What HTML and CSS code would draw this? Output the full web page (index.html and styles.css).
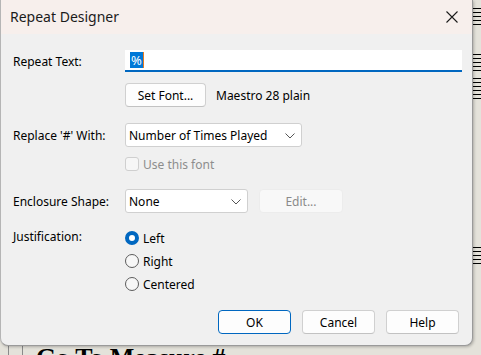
FILE: index.html
```html
<!DOCTYPE html>
<html>
<head>
<meta charset="utf-8">
<link rel="stylesheet" href="styles.css">
</head>
<body>
<div class="desk">
  <div class="staff s1"></div>
  <div class="staff s2"></div>
  <div class="staff s3"></div>
  <div class="staff s4"></div>
  <div class="vline v1"></div>
  <div class="vline v2"></div>
  <div class="goto">Go To Measure #</div>
  <div class="dialog">
    <div class="titlebar">
      <span class="title">Repeat Designer</span>
      <svg class="close" width="12" height="12" viewBox="0 0 12 12"><path d="M0.5 0.5 L11.5 11.5 M11.5 0.5 L0.5 11.5" stroke="#1b1b1b" stroke-width="1.1" fill="none"/></svg>
    </div>
    <div class="content">
      <div class="row r1">
        <label class="lbl">Repeat Text:</label>
        <div class="textbox"><span class="sel">%</span><span class="caret"></span></div>
      </div>
      <div class="row r2">
        <span class="lbl"></span>
        <button class="btn setfont">Set Font...</button>
        <span class="info">Maestro 28 plain</span>
      </div>
      <div class="row r3">
        <label class="lbl">Replace '#' With:</label>
        <div class="select sel-wide"><span>Number of Times Played</span><svg width="10" height="6" viewBox="0 0 10 6"><path d="M0.5 0.5 L5 5 L9.5 0.5" stroke="#555" fill="none" stroke-width="1"/></svg></div>
      </div>
      <div class="row r4">
        <span class="lbl"></span>
        <span class="check"></span>
        <span class="disabled-text">Use this font</span>
      </div>
      <div class="row r5">
        <label class="lbl">Enclosure Shape:</label>
        <div class="select sel-narrow"><span>None</span><svg width="10" height="6" viewBox="0 0 10 6"><path d="M0.5 0.5 L5 5 L9.5 0.5" stroke="#555" fill="none" stroke-width="1"/></svg></div>
        <button class="btn edit" disabled>Edit...</button>
      </div>
      <div class="row r6">
        <label class="lbl just">Justification:</label>
        <div class="radios">
          <div class="radio-row"><span class="radio on"></span><span>Left</span></div>
          <div class="radio-row"><span class="radio"></span><span>Right</span></div>
          <div class="radio-row"><span class="radio"></span><span>Centered</span></div>
        </div>
      </div>
      <div class="buttons">
        <button class="btn dlg default">OK</button>
        <button class="btn dlg">Cancel</button>
        <button class="btn dlg">Help</button>
      </div>
    </div>
  </div>
</div>
</body>
</html>
```

FILE: styles.css
```css
html, body {
  margin: 0;
  padding: 0;
}
body {
  width: 481px;
  height: 355px;
  overflow: hidden;
  background: #dcdad2;
  font-family: "Noto Sans", sans-serif;
  font-size: 12px;
  color: #000;
}
.desk {
  position: relative;
  width: 481px;
  height: 355px;
  overflow: hidden;
  background: #e4e2da;
}
.staff {
  position: absolute;
  left: 470px;
  width: 20px;
  height: 17px;
  background: repeating-linear-gradient(to bottom, #000 0, #000 1px, transparent 1px, transparent 4px);
}
.s1 { top: 8px; }
.s2 { top: 54px; }
.s3 { top: 78px; height: 22px; }
.s4 { top: 247px; }
.vline {
  position: absolute;
  top: 340px;
  width: 1px;
  height: 20px;
  background: #8a8a8a;
}
.v1 { left: 8px; }
.v2 { left: 22px; }
.goto {
  position: absolute;
  left: 36px;
  top: 343px;
  font-family: "Liberation Serif", serif;
  font-weight: bold;
  font-size: 26px;
  line-height: 30px;
  color: #000;
}
.dialog {
  position: relative;
  width: 473px;
  height: 346px;
  background: #f0f0f0;
  border: 1px solid #9a9a9a;
  border-top: none;
  border-left-color: #b5b5b5;
  border-radius: 0 0 8px 8px;
  box-sizing: border-box;
  box-shadow: 1px 1px 3px rgba(0,0,0,0.25);
  overflow: hidden;
}
.titlebar {
  height: 34px;
  background: #f7efec;
  display: flex;
  align-items: center;
  justify-content: space-between;
  padding: 0 14px 0 9px;
}
.title {
  font-size: 14px;
  color: #1b1b1b;
  margin-top: -1px;
}
.close {
  margin-top: -1px;
}
.content {
  padding: 16px 0 0 12px;
}
.row {
  display: flex;
  align-items: center;
}
.lbl {
  width: 112px;
  flex: none;
}
.textbox {
  width: 337px;
  height: 22px;
  background: #fff;
  border-bottom: 2px solid #0067c0;
  box-sizing: border-box;
  display: flex;
  align-items: center;
  padding-left: 5px;
}
.sel {
  background: #0078d7;
  color: #fff;
  font-size: 13px;
  line-height: 16px;
  padding: 0 1px;
}
.caret {
  width: 1px;
  height: 16px;
  background: #e87a1e;
}
.r2 { margin-top: 11px; }
.btn {
  font-family: inherit;
  font-size: 12px;
  color: #000;
  background: #fdfdfd;
  border: 1px solid #d0d0d0;
  border-bottom-color: #c2c2c2;
  border-radius: 4px;
  height: 24px;
  padding: 0;
  box-sizing: border-box;
}
.setfont { width: 81px; }
.info { margin-left: 10px; }
.r3 { margin-top: 16px; }
.select {
  height: 24px;
  background: #fff;
  border: 1px solid #d0d0d0;
  border-radius: 3px;
  box-sizing: border-box;
  display: flex;
  align-items: center;
  justify-content: space-between;
  padding: 0 6px 0 3px;
}
.select svg { margin-top: 1px; }
.sel-wide { width: 177px; }
.sel-narrow { width: 123px; }
.r4 { margin-top: 9px; height: 16px; }
.check {
  width: 14px;
  height: 14px;
  border: 1px solid #cfcfcf;
  background: #f6f6f6;
  border-radius: 3px;
  box-sizing: border-box;
  margin-right: 4px;
}
.disabled-text { color: #8d8d8d; }
.r5 { margin-top: 17px; }
.edit {
  width: 84px;
  margin-left: 11px;
  background: #f8f8f8;
  border-color: #ececec;
  color: #8a8a8a;
}
.r6 {
  margin-top: 17px;
  align-items: flex-start;
}
.just { margin-top: -2px; }
.radios {
  display: flex;
  flex-direction: column;
  gap: 7px;
}
.radio-row {
  display: flex;
  align-items: center;
  height: 16px;
}
.radio {
  width: 14px;
  height: 14px;
  border: 1px solid #5c5c5c;
  border-radius: 50%;
  background: #f7f7f7;
  box-sizing: border-box;
  margin-right: 4px;
  flex: none;
}
.radio.on {
  border: 4px solid #0067c0;
  background: #fff;
}
.buttons {
  display: flex;
  justify-content: flex-end;
  gap: 11px;
  margin-top: 18px;
  padding-right: 13px;
}
.dlg { width: 73px; }
.default {
  border: 1px solid #0067c0;
}
```
